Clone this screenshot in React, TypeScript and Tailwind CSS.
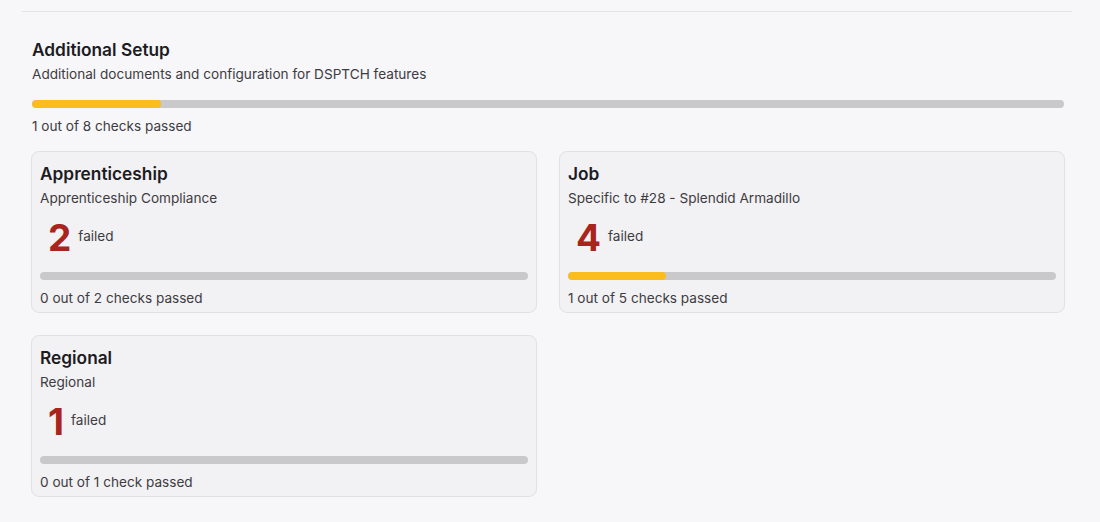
import React from "react";

function Bar({ pct }: { pct: number }) {
  return (
    <div className="h-2 w-full rounded-full bg-[#c9c8cb] overflow-hidden">
      <div className="h-full rounded-full bg-[#fbbc1e]" style={{ width: `${pct}%` }} />
    </div>
  );
}

function Card({ title, subtitle, failed, pct, label }: { title: string; subtitle: string; failed: number; pct: number; label: string }) {
  return (
    <div className="rounded-lg border border-[#e1e0e3] bg-[#f2f1f3] px-2 pt-[10px] pb-[5px]">
      <div className="text-[17.3px] font-semibold leading-[24px] text-[#1c1b1f]">{title}</div>
      <div className="mt-[3px] text-[13.6px] leading-[18px] text-[#3d3c42]">{subtitle}</div>
      <div className="mt-[10px] flex items-center gap-[7px] pl-2 h-[40px]">
        <span className="text-[37px] font-bold leading-none text-[#a8241d]">{failed}</span>
        <span className="-mt-[1px] text-[13.6px] text-[#3d3c42]">failed</span>
      </div>
      <div className="mt-[15px]"><Bar pct={pct} /></div>
      <div className="mt-[9px] text-[13.6px] leading-[18px] text-[#3d3c42]">{label}</div>
    </div>
  );
}

export default function App() {
  return (
    <div className="min-h-[522px] w-[1100px] bg-[#f7f6f8] pl-[22px] pr-[28px] pt-[11px]" style={{ fontFamily: "Inter, 'Noto Sans', sans-serif" }}>
      <div className="border-t border-[#e3e2e5] pl-[10px] pr-[8px] pt-[26px]">
        <div className="text-[17.3px] font-semibold leading-[24px] text-[#1c1b1f]">Additional Setup</div>
        <div className="mt-[3px] text-[13.6px] leading-[18px] text-[#3d3c42]">Additional documents and configuration for DSPTCH features</div>
        <div className="mt-[17px]"><Bar pct={12.5} /></div>
        <div className="mt-[9px] text-[13.6px] leading-[18px] text-[#3d3c42]">1 out of 8 checks passed</div>
        <div className="mt-[16px] -ml-px grid grid-cols-2 gap-[22px] w-[1034px]">
          <Card title="Apprenticeship" subtitle="Apprenticeship Compliance" failed={2} pct={0} label="0 out of 2 checks passed" />
          <Card title="Job" subtitle="Specific to #28 - Splendid Armadillo" failed={4} pct={20} label="1 out of 5 checks passed" />
          <Card title="Regional" subtitle="Regional" failed={1} pct={0} label="0 out of 1 check passed" />
        </div>
      </div>
    </div>
  );
}
